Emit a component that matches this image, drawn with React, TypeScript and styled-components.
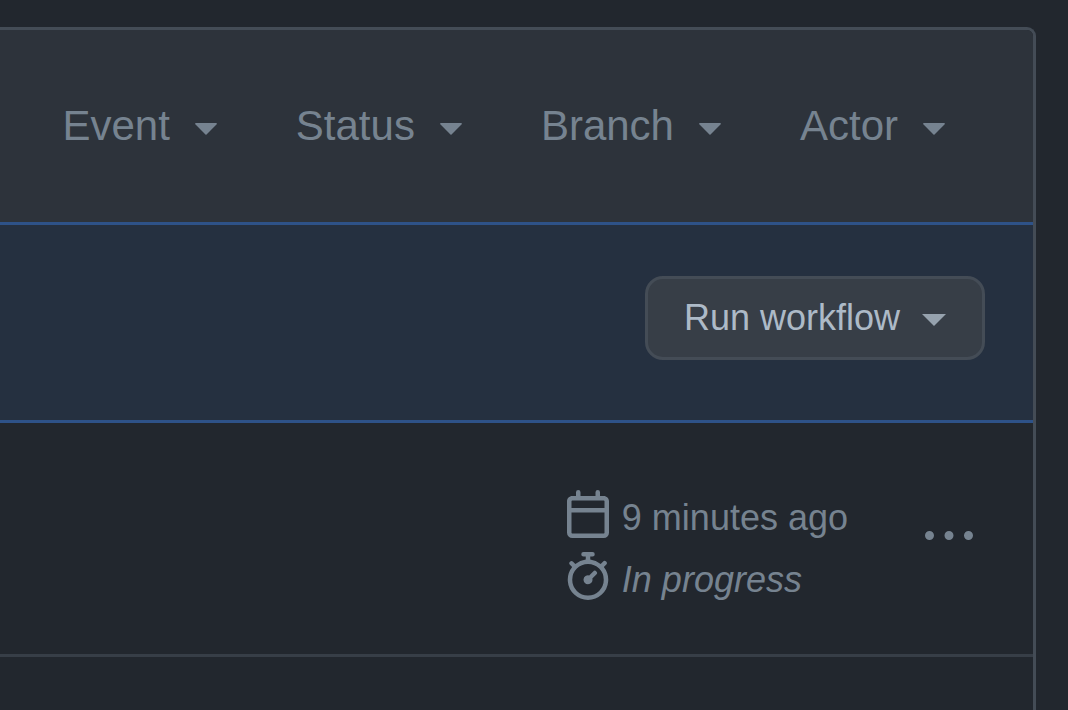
import React from "react";
import styled, { createGlobalStyle } from "styled-components";

const GlobalStyle = createGlobalStyle`
  *, *::before, *::after {
    box-sizing: border-box;
  }
  body {
    margin: 0;
    background: #22272e;
    color: #768390;
    font-family: "Liberation Sans", Arial, Helvetica, sans-serif;
  }
  button {
    font-family: inherit;
    cursor: pointer;
  }
`;

const Page = styled.main`
  display: flex;
  flex-direction: column;
  min-height: 100vh;
  padding: 27px 32px 0 0;
  overflow: hidden;
`;

const RunsBox = styled.section`
  flex: 1;
  border: 3px solid #444c56;
  border-width: 3px 3px 0 0;
  border-top-right-radius: 9px;
  overflow: hidden;
`;

const FilterBar = styled.header`
  display: flex;
  align-items: center;
  justify-content: flex-end;
  gap: 66px;
  padding: 72px 75px 72px 0;
  background: #2d333b;
`;

const FilterButton = styled.button`
  display: flex;
  align-items: center;
  gap: 12px;
  padding: 0;
  border: 0;
  background: none;
  color: #768390;
  font-size: 42px;
  line-height: 48px;
`;

const Icon = styled.svg`
  display: block;
  flex: none;
  width: 48px;
  height: 48px;
  fill: currentColor;
`;

const DispatchBar = styled.div`
  display: flex;
  justify-content: flex-end;
  padding: 51px 48px 60px 0;
  border: solid #2e5288;
  border-width: 3px 0;
  background: #253040;
`;

const RunButton = styled.button`
  display: flex;
  align-items: center;
  gap: 22px;
  height: 84px;
  padding: 0 36px;
  border: 3px solid #444c56;
  border-radius: 18px;
  background: #373e47;
  color: #adbac7;
  font-size: 36px;
  line-height: 60px;
`;

const Caret = styled.span`
  margin-top: 4px;
  border: 12px solid transparent;
  border-top-color: #96a2ae;
  border-bottom-width: 0;
`;

const RunRow = styled.article`
  display: flex;
  align-items: flex-start;
  justify-content: flex-end;
  gap: 77px;
  padding: 64px 60px 43px 0;
  border-bottom: 3px solid #373e47;
`;

const RunMeta = styled.div`
  display: flex;
  flex-direction: column;
`;

const MetaLine = styled.div<{ $italic?: boolean }>`
  display: flex;
  align-items: center;
  gap: 10px;
  font-size: 36px;
  line-height: 62px;
  font-style: ${({ $italic }) => ($italic ? "italic" : "normal")};

  ${Icon} {
    margin-bottom: 8px;
  }
`;

const MenuButton = styled.button`
  padding: 26px 0 0;
  border: 0;
  background: none;
  color: #768390;
`;

const PATHS = {
  triangle:
    "M4.427 7.427l3.396 3.396a.25.25 0 00.354 0l3.396-3.396A.25.25 0 0011.396 7H4.604a.25.25 0 00-.177.427z",
  calendar:
    "M4.75 0a.75.75 0 01.75.75V2h5V.75a.75.75 0 011.5 0V2h1.25c.966 0 1.75.784 1.75 1.75v10.5A1.75 1.75 0 0113.25 16H2.75A1.75 1.75 0 011 14.25V3.75C1 2.784 1.784 2 2.75 2H4V.75A.75.75 0 014.75 0zM2.5 7.5v6.75c0 .138.112.25.25.25h10.5a.25.25 0 00.25-.25V7.5h-11zm10.75-4H2.75a.25.25 0 00-.25.25V6h11V3.75a.25.25 0 00-.25-.25z",
  stopwatch:
    "M5.75.75A.75.75 0 016.5 0h3a.75.75 0 010 1.5h-.75v1l-.001.041a6.718 6.718 0 013.464 1.435l.007-.006.75-.75a.75.75 0 111.06 1.06l-.75.75-.006.007a6.75 6.75 0 11-10.548 0L2.72 5.03l-.75-.75a.75.75 0 011.06-1.06l.75.75.007.006A6.718 6.718 0 017.25 2.541V1.5H6.5a.75.75 0 01-.75-.75zM8 14.5A5.25 5.25 0 108 4a5.25 5.25 0 000 10.5zm.389-6.7l1.33-1.33a.75.75 0 111.061 1.06L9.45 8.861A1.502 1.502 0 018 10.75a1.5 1.5 0 11.389-2.95z",
  kebab:
    "M8 9a1.5 1.5 0 100-3 1.5 1.5 0 000 3zM1.5 9a1.5 1.5 0 100-3 1.5 1.5 0 000 3zm13 0a1.5 1.5 0 100-3 1.5 1.5 0 000 3z",
};

function Glyph({ name }: { name: keyof typeof PATHS }) {
  return (
    <Icon viewBox="0 0 16 16" aria-hidden="true">
      <path fillRule="evenodd" d={PATHS[name]} />
    </Icon>
  );
}

const FILTERS = ["Event", "Status", "Branch", "Actor"];

export default function App() {
  return (
    <>
      <GlobalStyle />
      <Page>
        <RunsBox>
          <FilterBar>
            {FILTERS.map((label) => (
              <FilterButton key={label} type="button" aria-haspopup="menu">
                {label}
                <Glyph name="triangle" />
              </FilterButton>
            ))}
          </FilterBar>
          <DispatchBar>
            <RunButton type="button" aria-haspopup="dialog">
              Run workflow
              <Caret />
            </RunButton>
          </DispatchBar>
          <RunRow>
            <RunMeta>
              <MetaLine>
                <Glyph name="calendar" />
                9 minutes ago
              </MetaLine>
              <MetaLine $italic>
                <Glyph name="stopwatch" />
                In progress
              </MetaLine>
            </RunMeta>
            <MenuButton type="button" aria-label="Show options">
              <Glyph name="kebab" />
            </MenuButton>
          </RunRow>
        </RunsBox>
      </Page>
    </>
  );
}
